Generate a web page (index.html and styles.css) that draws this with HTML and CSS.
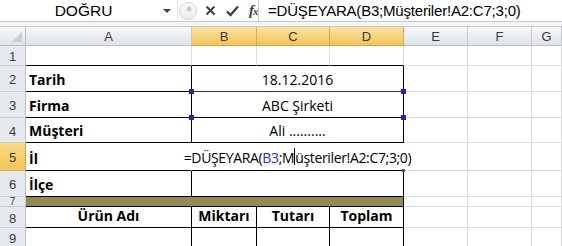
FILE: index.html
```html
<!DOCTYPE html>
<html lang="tr">
<head>
    <meta charset="UTF-8">
    <title>Müşteri Formu</title>
    <link rel="stylesheet" href="styles.css">
</head>
<body>
    <div class="formula-bar">
        <div class="name-box">
            <span class="name">DOĞRU</span>
            <span class="drop"></span>
        </div>
        <div class="grip"><span></span></div>
        <div class="fbtns">
            <svg width="11" height="11" viewBox="0 0 11 11"><path d="M1.5 1.5 L9.5 9.5 M9.5 1.5 L1.5 9.5" stroke="#404040" stroke-width="2"/></svg>
            <svg width="13" height="12" viewBox="0 0 13 12"><path d="M1 6.5 L4.5 10 L12 1.5" stroke="#404040" stroke-width="2.4" fill="none"/></svg>
            <span class="fx">f<i>x</i></span>
        </div>
        <div class="finput">=DÜŞEYARA(B3;Müşteriler!A2:C7;3;0)</div>
    </div>
    <div class="strip"></div>

    <div class="sheet">
        <!-- başlık satırı -->
        <div class="corner"><span></span></div>
        <div class="ch">A</div>
        <div class="ch sel">B</div>
        <div class="ch sel">C</div>
        <div class="ch sel">D</div>
        <div class="ch">E</div>
        <div class="ch">F</div>
        <div class="ch">G</div>

        <!-- 1 -->
        <div class="rh">1</div>
        <div class="c b"></div>
        <div class="c b"></div>
        <div class="c b"></div>
        <div class="c b"></div>
        <div class="c"></div>
        <div class="c"></div>
        <div class="c"></div>

        <!-- 2 -->
        <div class="rh">2</div>
        <div class="c b r bold">Tarih</div>
        <div class="c b r span3 center">18.12.2016</div>
        <div class="c"></div>
        <div class="c"></div>
        <div class="c"></div>

        <!-- 3 -->
        <div class="rh">3</div>
        <div class="c b r bold">Firma</div>
        <div class="c b r span3 center ref">
            ABC Şirketi
            <span class="hd tl"></span><span class="hd tr"></span>
            <span class="hd bl"></span><span class="hd br"></span>
        </div>
        <div class="c"></div>
        <div class="c"></div>
        <div class="c"></div>

        <!-- 4 -->
        <div class="rh">4</div>
        <div class="c b r bold">Müşteri</div>
        <div class="c b r span3 center">Ali ..........</div>
        <div class="c"></div>
        <div class="c"></div>
        <div class="c"></div>

        <!-- 5 -->
        <div class="rh active">5</div>
        <div class="c b nr bold">İl</div>
        <div class="c b nr span3 editor">
            <div class="edit-text">=DÜŞEYARA(<span class="ref-b">B3</span>;M<span class="caret"></span>üşteriler!A2:C7;3;0)</div>
            <span class="knob"></span>
        </div>
        <div class="c"></div>
        <div class="c"></div>
        <div class="c"></div>

        <!-- 6 -->
        <div class="rh">6</div>
        <div class="c b r bold">İlçe</div>
        <div class="c b r span3"></div>
        <div class="c"></div>
        <div class="c"></div>
        <div class="c"></div>

        <!-- 7 -->
        <div class="rh small">7</div>
        <div class="c b olive span4"></div>
        <div class="c"></div>
        <div class="c"></div>
        <div class="c"></div>

        <!-- 8 -->
        <div class="rh">8</div>
        <div class="c b r bold center">Ürün Adı</div>
        <div class="c b r bold center">Miktarı</div>
        <div class="c b r bold center">Tutarı</div>
        <div class="c b r bold center">Toplam</div>
        <div class="c"></div>
        <div class="c"></div>
        <div class="c"></div>

        <!-- 9 -->
        <div class="rh">9</div>
        <div class="c r"></div>
        <div class="c r"></div>
        <div class="c r"></div>
        <div class="c r"></div>
        <div class="c"></div>
        <div class="c"></div>
        <div class="c"></div>
    </div>
</body>
</html>
```

FILE: styles.css
```css
* {
    margin: 0;
    padding: 0;
    box-sizing: border-box;
}

body {
    width: 562px;
    height: 246px;
    overflow: hidden;
    background: #fff;
    font-family: "Liberation Sans", Arial, sans-serif;
    color: #000;
}

/* Formül çubuğu */
.formula-bar {
    height: 22px;
    display: flex;
    align-items: stretch;
    background: #fff;
    border-bottom: 1px solid #c6cbd1;
}

.name-box {
    width: 178px;
    display: flex;
    align-items: center;
    position: relative;
    border-right: 1px solid #e4e6e9;
}

.name {
    flex: 1;
    text-align: center;
    font-size: 15.5px;
    padding-left: 4px;
    padding-top: 1px;
}

.drop {
    width: 0;
    height: 0;
    border-left: 4px solid transparent;
    border-right: 4px solid transparent;
    border-top: 4px solid #444;
    margin-right: 6px;
}

.grip {
    width: 20px;
    display: flex;
    align-items: center;
    justify-content: flex-start;
}

.grip span {
    display: block;
    width: 18px;
    height: 18px;
    border: 1px solid #d2d5d9;
    border-radius: 9px;
    background: radial-gradient(circle at 9px 6px, #c9ccd0 2px, transparent 3px), linear-gradient(#fbfbfb, #e9ebee);
    margin-left: 1px;
}

.fbtns {
    width: 60px;
    display: flex;
    align-items: center;
    gap: 10px;
    padding-left: 7px;
}

.fx {
    font-family: "Liberation Serif", "DejaVu Serif", serif;
    font-style: italic;
    font-size: 15px;
    color: #404040;
    font-weight: bold;
    letter-spacing: -1px;
}

.fx i {
    font-size: 11px;
}

.finput {
    flex: 1;
    border-left: 1px solid #c6cbd1;
    font-size: 15px;
    letter-spacing: -0.2px;
    padding: 2px 0 0 9px;
    white-space: nowrap;
}

.strip {
    height: 5px;
    background: #f4f5f7;
    border-bottom: 1px solid #c6cbd1;
}

/* Tablo alanı */
.sheet {
    display: grid;
    grid-template-columns: 26px 166px 65px 73px 74px 64px 64px 30px;
    grid-template-rows: 19px 20px 26px 26px 25px 28px 26px 10px 21px 20px;
    font-family: "Open Sans", "Noto Sans", sans-serif;
    font-size: 14px;
}

.corner {
    background: linear-gradient(#f6f7f9, #dfe3e8);
    border-right: 1px solid #b9c0c8;
    border-bottom: 1px solid #b9c0c8;
    position: relative;
}

.corner span {
    position: absolute;
    right: 3px;
    bottom: 3px;
    width: 0;
    height: 0;
    border-left: 10px solid transparent;
    border-bottom: 10px solid #c9ced4;
}

.ch {
    background: linear-gradient(#f7f8fa, #dde2e8);
    border-right: 1px solid #c3c8ce;
    border-bottom: 1px solid #b9c0c8;
    display: flex;
    align-items: center;
    justify-content: center;
    font-family: "Liberation Sans", Arial, sans-serif;
    font-size: 13px;
    color: #3a3a3a;
    padding-top: 1px;
}

.ch.sel {
    background: linear-gradient(#fbe3a0, #f2c55c);
    border-right-color: #e2a93a;
    border-bottom-color: #d9a03c;
}

.rh {
    background: #e6e9ed;
    border-right: 1px solid #b9c0c8;
    border-bottom: 1px solid #c9ced4;
    display: flex;
    align-items: center;
    justify-content: center;
    font-family: "Liberation Sans", Arial, sans-serif;
    font-size: 13px;
    color: #3a3a3a;
    padding-top: 2px;
}

.rh.active {
    background: linear-gradient(#f9d97f, #f4c65a);
    border-right-color: #d9a03c;
    border-bottom-color: #e2b04c;
}

.rh.small {
    font-size: 10px;
    align-items: flex-end;
    overflow: hidden;
    line-height: 8px;
}

/* Hücreler */
.c {
    border-right: 1px solid #dadcdd;
    border-bottom: 1px solid #dadcdd;
    display: flex;
    align-items: flex-end;
    padding: 0 3px 2px;
    white-space: nowrap;
    min-width: 0;
}

.c.r {
    border-right-color: #000;
}

.c.b {
    border-bottom-color: #000;
}

.c.nr {
    border-right-color: #fff;
}

.span3 {
    grid-column: span 3;
}

.span4 {
    grid-column: span 4;
}

.center {
    justify-content: center;
}

.bold {
    font-weight: 700;
}

.olive {
    background: #948a54;
    border-right-color: #000;
}

/* B3 referans çerçevesi */
.ref {
    position: relative;
    box-shadow: 0 -1px 0 #2121b5;
    border-bottom-color: #2121b5;
}

.hd {
    position: absolute;
    width: 5px;
    height: 5px;
    background: #1f1fd0;
}

.hd.tl { left: -3px; top: -3px; }
.hd.tr { right: -3px; top: -3px; }
.hd.bl { left: -3px; bottom: -3px; }
.hd.br { right: -3px; bottom: -3px; }

/* Düzenleme modundaki hücre */
.editor {
    position: relative;
    justify-content: center;
    overflow: visible;
    padding-bottom: 3px;
}

.edit-text {
    display: flex;
    align-items: flex-end;
    justify-content: center;
    width: 100%;
    white-space: nowrap;
    letter-spacing: -0.35px;
}

.ref-b {
    color: #2b2be0;
}

.caret {
    display: inline-block;
    width: 0;
    height: 17px;
    border-left: 1px solid #000;
    margin-bottom: 2px;
}

.knob {
    position: absolute;
    right: -2px;
    bottom: -2px;
    width: 3px;
    height: 3px;
    background: #555;
}
```
